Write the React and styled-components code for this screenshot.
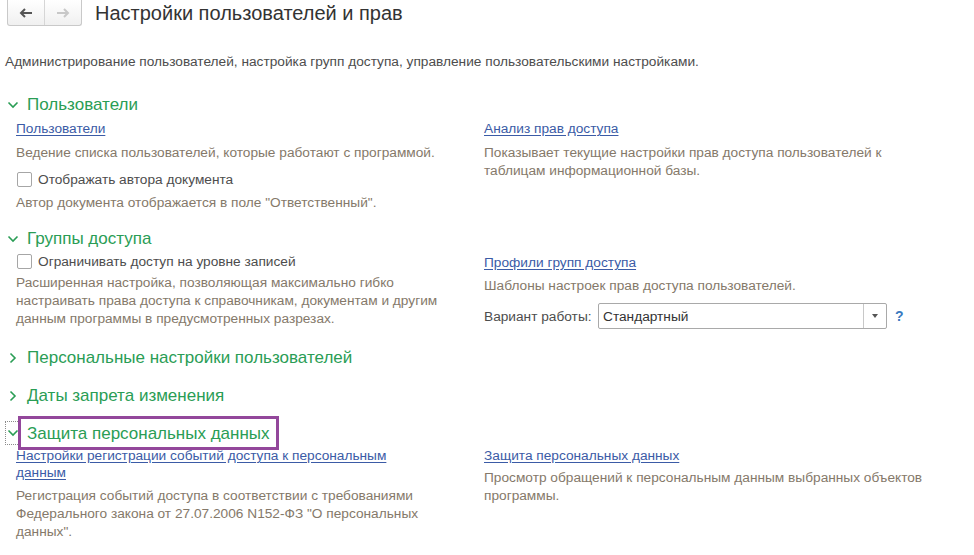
import React from 'react';
import styled, { createGlobalStyle } from 'styled-components';

const GlobalStyle = createGlobalStyle`
    body {
        margin: 0;
        background: #ffffff;
        font-family: "Liberation Sans", Arial, sans-serif;
        color: #4d4d4d;
    }
`;

function Chevron({ open }) {
    return (
        <svg width="12" height="12" viewBox="0 0 12 12">
            {open ? (
                <polyline points="1.5,3.5 6,8 10.5,3.5" fill="none" stroke="#2a9d55" strokeWidth="1.6" />
            ) : (
                <polyline points="3.5,1.5 8,6 3.5,10.5" fill="none" stroke="#2a9d55" strokeWidth="1.6" />
            )}
        </svg>
    );
}

function Section({ title, open, highlight, mt, children }) {
    return (
        <>
            <SectionHeader $mt={mt}>
                <ChevronBox $focused={highlight}>
                    <Chevron open={open} />
                </ChevronBox>
                <SectionTitle $highlight={highlight}>{title}</SectionTitle>
            </SectionHeader>
            {children}
        </>
    );
}

function Checkbox({ label, mt }) {
    return (
        <CheckRow $mt={mt}>
            <Box />
            <span>{label}</span>
        </CheckRow>
    );
}

function App() {
    return (
        <Page>
            <GlobalStyle />
            <TopBar>
                <NavGroup>
                    <NavButton>
                        <svg width="14" height="10" viewBox="0 0 14 10">
                            <path d="M13 5H3M6 1L2 5l4 4" fill="none" stroke="#555" strokeWidth="2" />
                        </svg>
                    </NavButton>
                    <NavButton $disabled>
                        <svg width="14" height="10" viewBox="0 0 14 10">
                            <path d="M1 5h10M8 1l4 4-4 4" fill="none" stroke="#c8c8c8" strokeWidth="2" />
                        </svg>
                    </NavButton>
                </NavGroup>
                <PageTitle>Настройки пользователей и прав</PageTitle>
            </TopBar>

            <Intro>
                Администрирование пользователей, настройка групп доступа, управление пользовательскими настройками.
            </Intro>

            <Section title="Пользователи" open mt={23}>
                <Columns>
                    <Column>
                        <Link $mt={4}>Пользователи</Link>
                        <Note $mt={6}>Ведение списка пользователей, которые работают с программой.</Note>
                        <Checkbox label="Отображать автора документа" mt={7} />
                        <Note $mt={5}>Автор документа отображается в поле "Ответственный".</Note>
                    </Column>
                    <Column>
                        <Link $mt={4}>Анализ прав доступа</Link>
                        <Note $mt={6}>
                            Показывает текущие настройки прав доступа пользователей к
                            <br />
                            таблицам информационной базы.
                        </Note>
                    </Column>
                </Columns>
            </Section>

            <Section title="Группы доступа" open mt={16}>
                <Columns>
                    <Column>
                        <Checkbox label="Ограничивать доступ на уровне записей" mt={1} />
                        <Note $mt={3}>
                            Расширенная настройка, позволяющая максимально гибко
                            <br />
                            настраивать права доступа к справочникам, документам и другим
                            <br />
                            данным программы в предусмотренных разрезах.
                        </Note>
                    </Column>
                    <Column>
                        <Link $mt={4}>Профили групп доступа</Link>
                        <Note $mt={5}>Шаблоны настроек прав доступа пользователей.</Note>
                        <FieldRow>
                            <FieldLabel>Вариант работы:</FieldLabel>
                            <Select>
                                <SelectValue>Стандартный</SelectValue>
                                <SelectButton>
                                    <svg width="6" height="4" viewBox="0 0 6 4">
                                        <path d="M0 0h6L3 4z" fill="#555" />
                                    </svg>
                                </SelectButton>
                            </Select>
                            <Help>?</Help>
                        </FieldRow>
                    </Column>
                </Columns>
            </Section>

            <Section title="Персональные настройки пользователей" mt={18} />
            <Section title="Даты запрета изменения" mt={16} />

            <Section title="Защита персональных данных" open highlight mt={15}>
                <Columns>
                    <Column>
                        <Link $mt={3} $lh={17}>
                            Настройки регистрации событий доступа к персональным
                            <br />
                            данным
                        </Link>
                        <Note $mt={6}>
                            Регистрация событий доступа в соответствии с требованиями
                            <br />
                            Федерального закона от 27.07.2006 N152-ФЗ "О персональных
                            <br />
                            данных".
                        </Note>
                    </Column>
                    <Column>
                        <Link $mt={3}>Защита персональных данных</Link>
                        <Note $mt={4}>
                            Просмотр обращений к персональным данным выбранных объектов
                            <br />
                            программы.
                        </Note>
                    </Column>
                </Columns>
            </Section>
        </Page>
    );
}

export default App;

const Page = styled.div`
    width: 974px;
    height: 555px;
    overflow: hidden;
    display: flex;
    flex-direction: column;
    font-size: 13.7px;
`;

const TopBar = styled.div`
    display: flex;
    align-items: center;
    height: 26px;
    padding-left: 7px;
`;

const NavGroup = styled.div`
    display: flex;
    height: 25px;
    border: 1px solid #c9c9c9;
    border-top: none;
    border-radius: 0 0 3px 3px;
    background: linear-gradient(#ffffff, #f0f0f0);
`;

const NavButton = styled.div`
    width: 36px;
    display: flex;
    align-items: center;
    justify-content: center;
    & + & {
        border-left: 1px solid #d6d6d6;
    }
`;

const PageTitle = styled.h1`
    margin: 0 0 0 13px;
    font-weight: 400;
    font-size: 20px;
    color: #333333;
`;

const Intro = styled.div`
    margin-top: 27px;
    padding-left: 5px;
    line-height: 18px;
    color: #4d4d4d;
`;

const SectionHeader = styled.div`
    display: flex;
    align-items: center;
    height: 22px;
    margin-top: ${(p) => p.$mt || 0}px;
    padding-left: 5px;
`;

const ChevronBox = styled.div`
    width: 15px;
    height: 22px;
    display: flex;
    align-items: center;
    justify-content: center;
    box-sizing: border-box;
    ${(p) =>
        p.$focused &&
        `
        border: 1px dotted #8c8c8c;
        border-right: none;
        height: 24px;
    `}
`;

const SectionTitle = styled.div`
    font-size: 17px;
    color: #2a9d55;
    line-height: 22px;
    padding: 0 6px 0 6px;
    margin-left: 1px;
    ${(p) =>
        p.$highlight &&
        `
        outline: 3px solid #93479b;
        outline-offset: 2px;
        padding: 2px 4px 0 4px;
        margin-left: 3px;
        background: #fff;
    `}
`;

const Columns = styled.div`
    display: grid;
    grid-template-columns: 468px 1fr;
    padding-left: 16px;
`;

const Column = styled.div`
    display: flex;
    flex-direction: column;
    align-items: flex-start;
`;

const Link = styled.a`
    margin-top: ${(p) => p.$mt || 0}px;
    line-height: ${(p) => p.$lh || 18}px;
    color: #3b5ba6;
    text-decoration: underline;
    text-underline-offset: 2px;
    cursor: pointer;
`;

const Note = styled.div`
    margin-top: ${(p) => p.$mt || 0}px;
    line-height: 18px;
    color: #85796a;
`;

const CheckRow = styled.label`
    display: flex;
    align-items: center;
    gap: 6px;
    height: 20px;
    margin-top: ${(p) => p.$mt || 0}px;
    color: #4d4d4d;
`;

const Box = styled.span`
    width: 13px;
    height: 13px;
    margin-left: 1px;
    border: 1px solid #a6a6a6;
    border-radius: 2px;
    background: #fff;
`;

const FieldRow = styled.div`
    display: flex;
    align-items: center;
    margin-top: 8px;
`;

const FieldLabel = styled.span`
    width: 114px;
    color: #4d4d4d;
`;

const Select = styled.div`
    display: flex;
    width: 289px;
    height: 26px;
    box-sizing: border-box;
    border: 1px solid #a9a9a9;
    border-radius: 2px;
    background: #fff;
`;

const SelectValue = styled.div`
    flex: 1;
    display: flex;
    align-items: center;
    padding-left: 4px;
    color: #333;
`;

const SelectButton = styled.div`
    width: 22px;
    display: flex;
    align-items: center;
    justify-content: center;
    border-left: 1px solid #c8c8c8;
`;

const Help = styled.span`
    margin-left: 8px;
    color: #3a7abf;
    font-weight: 700;
    font-size: 14px;
`;
